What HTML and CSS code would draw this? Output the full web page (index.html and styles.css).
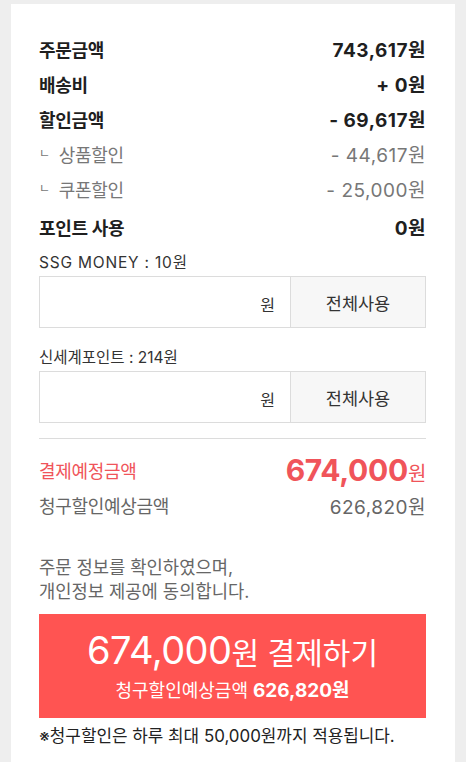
FILE: index.html
```html
<!DOCTYPE html>
<html lang="ko">
<head>
<meta charset="utf-8">
<link rel="stylesheet" href="styles.css">
</head>
<body>
<div class="card">
  <div class="row bold"><span>주문금액</span><span class="amt">743,617원</span></div>
  <div class="row bold"><span>배송비</span><span class="amt">+ 0원</span></div>
  <div class="row bold"><span>할인금액</span><span class="amt">- 69,617원</span></div>
  <div class="row sub"><span><span class="mark">ㄴ</span>상품할인</span><span class="amt">- 44,617원</span></div>
  <div class="row sub"><span><span class="mark">ㄴ</span>쿠폰할인</span><span class="amt">- 25,000원</span></div>
  <div class="row bold points"><span>포인트 사용</span><span class="amt">0원</span></div>

  <div class="label"><span class="latin">SSG MONEY : 10</span>원</div>
  <div class="field">
    <div class="input"><span>원</span></div>
    <div class="btn">전체사용</div>
  </div>

  <div class="label">신세계포인트 : 214원</div>
  <div class="field">
    <div class="input"><span>원</span></div>
    <div class="btn">전체사용</div>
  </div>

  <div class="divider"></div>

  <div class="row total"><span>결제예정금액</span><span class="big">674,000<small>원</small></span></div>
  <div class="row expect"><span>청구할인예상금액</span><span class="amt">626,820원</span></div>

  <p class="agree">주문 정보를 확인하였으며,<br>개인정보 제공에 동의합니다.</p>

  <div class="pay">
    <div class="pay-main"><span class="num">674,000</span>원 결제하기</div>
    <div class="pay-sub">청구할인예상금액 <b>626,820원</b></div>
  </div>
  <p class="note">※청구할인은 하루 최대 50,000원까지 적용됩니다.</p>
</div>
</body>
</html>
```
FILE: styles.css
```css
* { box-sizing: border-box; }
html, body { margin: 0; padding: 0; }
body {
  background: #eeeeee;
  font-family: "Inter", "Noto Sans CJK KR", sans-serif;
  color: #222;
  width: 466px;
  height: 762px;
  overflow: hidden;
}
.card {
  margin: 4px 11px 0;
  background: #fff;
  padding: 27px 29px 40px 28px;
  min-height: 758px;
}
.row {
  display: flex;
  justify-content: space-between;
  align-items: center;
  height: 35px;
  font-size: 18px;
  letter-spacing: -0.3px;
}
.row .amt { font-size: 19px; letter-spacing: 0.5px; }
.row.bold { font-weight: 700; color: #1f1f1f; }
.row.sub { color: #777; font-size: 18px; }
.row.sub .mark { font-size: 12px; margin-right: 9px; position: relative; top: -4px; }
.row.points { margin-top: 3px; }
.label {
  font-size: 15.5px;
  color: #333;
  margin-top: 9px;
  line-height: 20px;
}
.label .latin { letter-spacing: 0.8px; }
.field {
  display: flex;
  height: 52px;
  border: 1px solid #dcdcdc;
  margin-top: 3px;
}
.input {
  flex: 1;
  display: flex;
  align-items: center;
  justify-content: flex-end;
  padding-right: 15px;
  font-size: 16px;
  color: #333;
  padding-top: 3px;
}
.btn {
  width: 135px;
  background: #f7f7f7;
  border-left: 1px solid #dcdcdc;
  display: flex;
  align-items: center;
  justify-content: center;
  font-size: 17.5px;
  color: #333;
}
.field + .label { margin-top: 20px; }
.divider {
  border-top: 1px solid #dcdcdc;
  margin-top: 15px;
}
.row.total {
  margin-top: 13px;
  color: #f0545a;
  height: 36px;
}
.row.total .big {
  font-size: 30px;
  font-weight: 700;
  letter-spacing: -0.3px;
}
.row.total .big small { font-size: 20px; font-weight: 400; }
.row.expect { color: #666; height: 34px; }
.agree {
  margin: 34px 0 0;
  font-size: 17.7px;
  line-height: 24px;
  color: #666;
}
.pay {
  margin-top: 10px;
  height: 104px;
  background: #ff5452;
  color: #fff;
  display: flex;
  flex-direction: column;
  align-items: center;
  justify-content: center;
}
.pay-main { font-size: 30px; line-height: 40px; }
.pay-main .num { font-size: 38px; letter-spacing: -0.5px; }
.pay-sub { font-size: 18px; margin-top: 2px; }
.pay-sub b { font-size: 19px; }
.note {
  margin: 4px 0 0;
  font-size: 16.9px;
  color: #222;
}
```
